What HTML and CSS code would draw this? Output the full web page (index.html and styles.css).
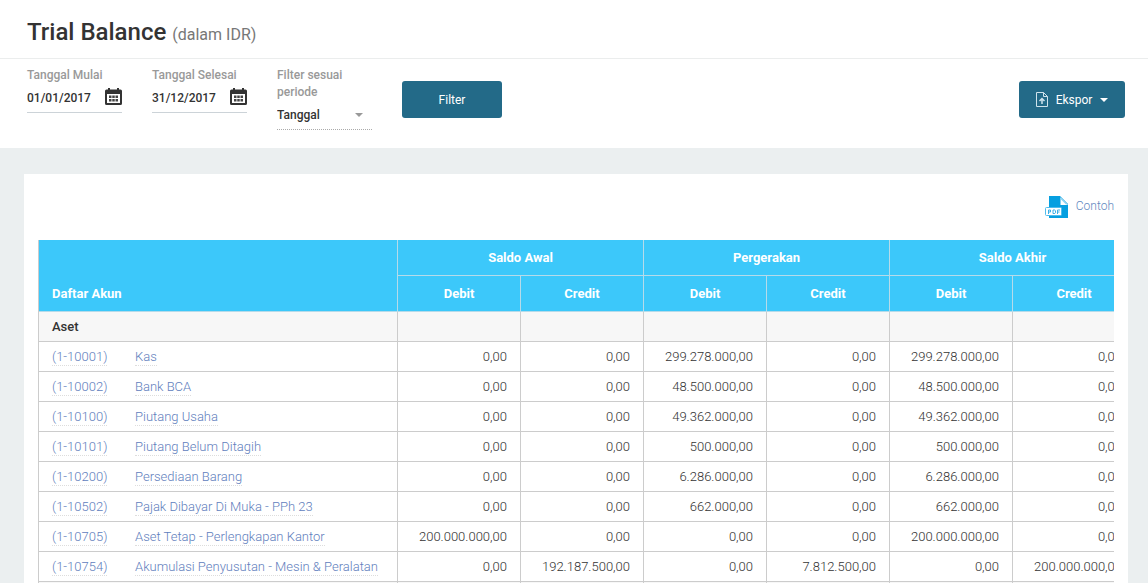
FILE: index.html
```html
<!DOCTYPE html>
<html lang="id">
<head>
<meta charset="utf-8">
<title>Trial Balance</title>
<link rel="stylesheet" href="styles.css">
</head>
<body>
<header class="page-header">
  <h1 class="title">Trial Balance <small class="title-note">(dalam IDR)</small></h1>
</header>
<form class="filters">
  <div class="field">
    <label class="field-label" for="start">Tanggal Mulai</label>
    <div class="date-box">
      <input class="date-input" id="start" type="text" value="01/01/2017">
      <svg class="calendar" viewBox="0 0 17 17" aria-hidden="true"><path fill="#333" fill-rule="evenodd" d="M3 0h2v1.500h7V0h2v1.500h1.500A1.500 1.500 0 0 1 17 3v12.500a1.500 1.500 0 0 1-1.500 1.500h-14A1.500 1.500 0 0 1 0 15.500V3a1.500 1.500 0 0 1 1.500-1.500H3zM2 6v9h13V6z"/><path fill="#444" d="M4 7.500h2.500v2.500H4zM7.250 7.500h2.500v2.500h-2.500zM10.500 7.500H13v2.500h-2.500zM4 11h2.500v2.500H4zM7.250 11h2.500v2.500h-2.500zM10.500 11H13v2.500h-2.500z"/></svg>
    </div>
  </div>
  <div class="field">
    <label class="field-label" for="end">Tanggal Selesai</label>
    <div class="date-box">
      <input class="date-input" id="end" type="text" value="31/12/2017">
      <svg class="calendar" viewBox="0 0 17 17" aria-hidden="true"><path fill="#333" fill-rule="evenodd" d="M3 0h2v1.500h7V0h2v1.500h1.500A1.500 1.500 0 0 1 17 3v12.500a1.500 1.500 0 0 1-1.500 1.500h-14A1.500 1.500 0 0 1 0 15.500V3a1.500 1.500 0 0 1 1.500-1.500H3zM2 6v9h13V6z"/><path fill="#444" d="M4 7.500h2.500v2.500H4zM7.250 7.500h2.500v2.500h-2.500zM10.500 7.500H13v2.500h-2.500zM4 11h2.500v2.500H4zM7.250 11h2.500v2.500h-2.500zM10.500 11H13v2.500h-2.500z"/></svg>
    </div>
  </div>
  <div class="field">
    <label class="field-label" for="period">Filter sesuai periode</label>
    <div class="select-box">
      <select class="select" id="period"><option>Tanggal</option></select>
      <svg class="select-arrow" viewBox="0 0 8 4" aria-hidden="true"><path fill="#999" d="M0 0h8L4 4z"/></svg>
    </div>
  </div>
  <button class="button" type="button">Filter</button>
  <button class="button export" type="button">
    <svg class="export-icon" viewBox="0 0 12 15" aria-hidden="true"><path fill="none" stroke="#cfe3ec" d="M.5.5h7l4 4v10H.5zM7.500.5v4h4"/><path fill="none" stroke="#cfe3ec" stroke-width="1.500" d="M6 12V7M3.500 9 6 6.500 8.500 9"/></svg>
    Ekspor
    <svg class="export-arrow" viewBox="0 0 8 4" aria-hidden="true"><path fill="#fff" d="M0 0h8L4 4z"/></svg>
  </button>
</form>
<main class="card">
  <div class="card-tools">
    <a class="sample" href="#">
      <svg class="pdf-icon" viewBox="0 0 23 23" aria-hidden="true"><path fill="#069fe0" d="M4 0h11l8 8v14H4z"/><path fill="#fff" d="M15.500 1.500V9H23z"/><path fill="#8ed3f3" d="M15.500 1 22.500 8.500h-1.500L15.500 3z"/><rect x=".5" y="11.500" width="16" height="8" rx="1" fill="#fff" stroke="#4fbcec"/><path fill="none" stroke="#3aaee6" d="M3.500 18v-4h2v2h-2M8 14v3.500h1.800l.7-.7v-2.100l-.7-.7zM12.500 18v-4H15M12.500 16h2"/></svg>
      Contoh
    </a>
  </div>
  <div class="table-wrap">
    <table class="balance">
      <colgroup><col class="col-account"><col span="6" class="col-amount"></colgroup>
      <thead>
        <tr><th class="account-head" rowspan="2" scope="col">Daftar Akun</th><th colspan="2" scope="colgroup">Saldo Awal</th><th colspan="2" scope="colgroup">Pergerakan</th><th colspan="2" scope="colgroup">Saldo Akhir</th></tr>
        <tr><th scope="col">Debit</th><th scope="col">Credit</th><th scope="col">Debit</th><th scope="col">Credit</th><th scope="col">Debit</th><th scope="col">Credit</th></tr>
      </thead>
      <tbody>
        <tr class="group"><td>Aset</td><td></td><td></td><td></td><td></td><td></td><td></td></tr>
        <tr><td><div class="account"><a class="link" href="#">(1-10001)</a><a class="link" href="#">Kas</a></div></td><td>0,00</td><td>0,00</td><td>299.278.000,00</td><td>0,00</td><td>299.278.000,00</td><td>0,00</td></tr>
        <tr><td><div class="account"><a class="link" href="#">(1-10002)</a><a class="link" href="#">Bank BCA</a></div></td><td>0,00</td><td>0,00</td><td>48.500.000,00</td><td>0,00</td><td>48.500.000,00</td><td>0,00</td></tr>
        <tr><td><div class="account"><a class="link" href="#">(1-10100)</a><a class="link" href="#">Piutang Usaha</a></div></td><td>0,00</td><td>0,00</td><td>49.362.000,00</td><td>0,00</td><td>49.362.000,00</td><td>0,00</td></tr>
        <tr><td><div class="account"><a class="link" href="#">(1-10101)</a><a class="link" href="#">Piutang Belum Ditagih</a></div></td><td>0,00</td><td>0,00</td><td>500.000,00</td><td>0,00</td><td>500.000,00</td><td>0,00</td></tr>
        <tr><td><div class="account"><a class="link" href="#">(1-10200)</a><a class="link" href="#">Persediaan Barang</a></div></td><td>0,00</td><td>0,00</td><td>6.286.000,00</td><td>0,00</td><td>6.286.000,00</td><td>0,00</td></tr>
        <tr><td><div class="account"><a class="link" href="#">(1-10502)</a><a class="link" href="#">Pajak Dibayar Di Muka - PPh 23</a></div></td><td>0,00</td><td>0,00</td><td>662.000,00</td><td>0,00</td><td>662.000,00</td><td>0,00</td></tr>
        <tr><td><div class="account"><a class="link" href="#">(1-10705)</a><a class="link" href="#">Aset Tetap - Perlengkapan Kantor</a></div></td><td>200.000.000,00</td><td>0,00</td><td>0,00</td><td>0,00</td><td>200.000.000,00</td><td>0,00</td></tr>
        <tr><td><div class="account"><a class="link" href="#">(1-10754)</a><a class="link" href="#">Akumulasi Penyusutan - Mesin &amp; Peralatan</a></div></td><td>0,00</td><td>192.187.500,00</td><td>0,00</td><td>7.812.500,00</td><td>0,00</td><td>200.000.000,00</td></tr>
        <tr class="group"><td></td><td></td><td></td><td></td><td></td><td></td><td></td></tr>
      </tbody>
    </table>
  </div>
</main>
</body>
</html>
```
FILE: styles.css
```css
* { box-sizing: border-box; }

body {
  margin: 0;
  height: 100vh;
  overflow: hidden;
  background: #ebeff0;
  color: #333;
  font: 13px/20px Roboto, "Liberation Sans", sans-serif;
}

.page-header {
  padding: 16px 27px 10px;
  background: #fff;
  border-bottom: 1px solid #ebeded;
}

.title { margin: 0; font-size: 24px; line-height: 32px; font-weight: 500; }
.title-note { font-size: 16px; line-height: 16px; font-weight: 400; color: #777; }

.filters {
  display: flex;
  align-items: flex-start;
  gap: 30px;
  padding: 8px 23px 18px 27px;
  background: #fff;
}

.field { width: 95px; flex: none; }
.field-label {
  display: block;
  font-size: 12px;
  line-height: 17px;
  font-weight: 500;
  color: #999;
}

.date-box {
  display: flex;
  align-items: flex-start;
  justify-content: space-between;
  padding-top: 4px;
  height: 29px;
  border-bottom: 1px solid #ccd3d8;
}
.date-input {
  width: 74px;
  height: 20px;
  padding: 0;
  border: 0;
  background: none;
  color: #333;
  font: 500 12px/20px Roboto, sans-serif;
}
.calendar { width: 17px; height: 17px; }

.select-box {
  display: flex;
  align-items: center;
  height: 29px;
  border-bottom: 1px dotted #aaa;
}
.select {
  flex: 1;
  min-width: 0;
  height: 20px;
  padding: 0;
  border: 0;
  background: none;
  appearance: none;
  color: #333;
  font: 500 12px/20px Roboto, sans-serif;
}
.select-arrow { width: 8px; height: 4px; margin-right: 9px; }

.button {
  width: 100px;
  height: 37px;
  margin-top: 14px;
  padding: 0;
  border: 0;
  border-radius: 3px;
  background: #236a88;
  color: #fff;
  font: 400 12px/20px Roboto, sans-serif;
}
.export {
  display: flex;
  align-items: center;
  justify-content: center;
  gap: 8px;
  width: 106px;
  margin-left: auto;
}
.export-icon { width: 12px; height: 15px; }
.export-arrow { width: 8px; height: 4px; }

.card {
  margin: 26px 20px 0 24px;
  padding: 22px 14px 14px;
  background: #fff;
}
.card-tools { display: flex; justify-content: flex-end; padding-bottom: 21px; }
.sample {
  display: flex;
  align-items: flex-start;
  gap: 8px;
  color: #6288c0;
  font-size: 12px;
  font-weight: 300;
  text-decoration: none;
}
.pdf-icon { width: 23px; height: 23px; }

.table-wrap { overflow: hidden; }
.balance {
  width: 1098px;
  table-layout: fixed;
  border-collapse: separate;
  border-spacing: 0;
  border-left: 1px solid #ccc;
}
.col-account { width: 359px; }
.col-amount { width: 123px; }

.balance th,
.balance td {
  padding: 0 13px;
  border-right: 1px solid #ccc;
  border-bottom: 1px solid #ccc;
}
.balance th {
  height: 36px;
  background: #3cc8fa;
  border-color: #b5dbea;
  color: #fff;
  font-weight: 700;
}
.balance th.account-head {
  padding-bottom: 7px;
  text-align: left;
  vertical-align: bottom;
}
.balance td {
  height: 30px;
  background: #fff;
  font-weight: 300;
  text-align: right;
}
.balance td:first-child { text-align: left; }
.balance .group td { background: #f7f7f7; font-weight: 500; }

.account { display: grid; grid-template-columns: 83px 1fr; justify-items: start; }
.link {
  color: #5f80bd;
  line-height: 17px;
  white-space: nowrap;
  text-decoration: none;
  border-bottom: 1px dotted #ddd;
}
```
